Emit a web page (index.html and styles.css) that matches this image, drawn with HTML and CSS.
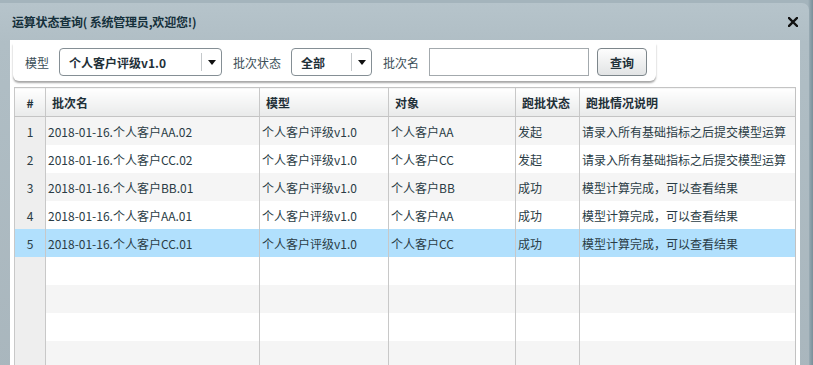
FILE: index.html
```html
<!DOCTYPE html>
<html lang="zh-CN">
<head>
  <meta charset="UTF-8">
  <title>运算状态查询</title>
  <link rel="stylesheet" href="styles.css">
</head>
<body>
  <div class="window">
    <div class="window-header">
      <span class="window-title">运算状态查询( 系统管理员,欢迎您!)</span>
      <svg class="close-icon" width="10" height="10" viewBox="0 0 10 10">
        <path d="M1 1 L9 9 M9 1 L1 9" stroke="#111" stroke-width="2.4" stroke-linecap="square"/>
      </svg>
    </div>

    <div class="window-body">
      <div class="toolbar">
        <span class="label">模型</span>
        <div class="combo combo-model">
          <span class="combo-text">个人客户评级v1.0</span>
          <span class="combo-arrow"></span>
        </div>
        <span class="label">批次状态</span>
        <div class="combo combo-status">
          <span class="combo-text">全部</span>
          <span class="combo-arrow"></span>
        </div>
        <span class="label">批次名</span>
        <input class="text-input" type="text">
        <button class="btn">查询</button>
      </div>

      <table class="grid">
        <colgroup>
          <col class="c-num">
          <col class="c-name">
          <col class="c-model">
          <col class="c-target">
          <col class="c-state">
          <col class="c-desc">
        </colgroup>
        <thead>
          <tr>
            <th class="num">#</th>
            <th>批次名</th>
            <th>模型</th>
            <th>对象</th>
            <th>跑批状态</th>
            <th>跑批情况说明</th>
          </tr>
        </thead>
        <tbody>
          <tr class="alt">
            <td class="num">1</td>
            <td>2018-01-16.个人客户AA.02</td>
            <td>个人客户评级v1.0</td>
            <td>个人客户AA</td>
            <td>发起</td>
            <td>请录入所有基础指标之后提交模型运算</td>
          </tr>
          <tr>
            <td class="num">2</td>
            <td>2018-01-16.个人客户CC.02</td>
            <td>个人客户评级v1.0</td>
            <td>个人客户CC</td>
            <td>发起</td>
            <td>请录入所有基础指标之后提交模型运算</td>
          </tr>
          <tr class="alt">
            <td class="num">3</td>
            <td>2018-01-16.个人客户BB.01</td>
            <td>个人客户评级v1.0</td>
            <td>个人客户BB</td>
            <td>成功</td>
            <td>模型计算完成，可以查看结果</td>
          </tr>
          <tr>
            <td class="num">4</td>
            <td>2018-01-16.个人客户AA.01</td>
            <td>个人客户评级v1.0</td>
            <td>个人客户AA</td>
            <td>成功</td>
            <td>模型计算完成，可以查看结果</td>
          </tr>
          <tr class="selected">
            <td class="num">5</td>
            <td>2018-01-16.个人客户CC.01</td>
            <td>个人客户评级v1.0</td>
            <td>个人客户CC</td>
            <td>成功</td>
            <td>模型计算完成，可以查看结果</td>
          </tr>
          <tr><td class="num"></td><td></td><td></td><td></td><td></td><td></td></tr>
          <tr class="alt"><td class="num"></td><td></td><td></td><td></td><td></td><td></td></tr>
          <tr><td class="num"></td><td></td><td></td><td></td><td></td><td></td></tr>
          <tr class="alt"><td class="num"></td><td></td><td></td><td></td><td></td><td></td></tr>
        </tbody>
      </table>
    </div>
  </div>
</body>
</html>
```

FILE: styles.css
```css
html, body {
  height: 100%;
}

body {
  margin: 0;
  overflow: hidden;
  background: linear-gradient(to right, #a4b4bc 0, #a4b4bc 808px, #889ca6 811px, #7a8f99 100%);
  font-family: "Noto Sans CJK SC", "Noto Sans", sans-serif;
  font-size: 12px;
  color: #2a3c45;
}

.window {
  margin-top: 3px;
  width: 809px;
  height: 420px;
  border-radius: 0 7px 0 0;
  background: linear-gradient(to bottom, #b6c4cb 0, #b0bec5 40px, #a8b5bc 100%);
}

.window-header {
  display: flex;
  align-items: center;
  justify-content: space-between;
  height: 37px;
  padding: 0 11px 0 12px;
}

.window-title {
  font-weight: bold;
  color: #15303b;
  letter-spacing: -0.2px;
}

.close-icon {
  display: block;
}

.window-body {
  margin: 0 9px 0 10px;
  height: 400px;
  background: #fff;
  padding-top: 3px;
}

/* search bar */
.toolbar {
  display: inline-flex;
  align-items: center;
  margin-left: 3px;
  height: 38px;
  padding: 0 9px 0 12px;
  background: #fff;
  border-radius: 0 0 6px 6px;
  box-shadow: 0 2px 2px rgba(0, 0, 0, 0.35);
}

.label {
  color: #3b4e57;
  margin-right: 10px;
}

.combo {
  display: flex;
  align-items: center;
  border: 1px solid #858f95;
  border-radius: 4px;
  background: #fff;
  margin-right: 11px;
  box-sizing: border-box;
  height: 28px;
}

.combo-model {
  width: 163px;
}

.combo-status {
  width: 81px;
}

.combo-text {
  flex: 1;
  padding-left: 9px;
  font-weight: bold;
  color: #1f3038;
}

.combo-arrow {
  position: relative;
  width: 19px;
  height: 18px;
  border-left: 1px solid #c4c8cb;
}

.combo-arrow::after {
  content: "";
  position: absolute;
  left: 6px;
  top: 7px;
  border-left: 4px solid transparent;
  border-right: 4px solid transparent;
  border-top: 5px solid #111;
}

.text-input {
  width: 160px;
  height: 28px;
  box-sizing: border-box;
  border: 1px solid #a3a9ad;
  margin: 0 8px 0 0;
  padding: 0 4px;
  font-family: inherit;
}

.btn {
  width: 50px;
  height: 28px;
  border: 1px solid #7d868b;
  border-radius: 4px;
  background: linear-gradient(to bottom, #fdfdfd, #e2e4e5);
  font-family: inherit;
  font-size: 12px;
  font-weight: bold;
  color: #1f3038;
  padding: 0;
}

/* data grid */
.grid {
  margin: 6px 0 0 4px;
  width: 781px;
  table-layout: fixed;
  border-collapse: collapse;
  border-left: 1px solid #c2c2c2;
  border-right: 1px solid #c2c2c2;
}

.c-num { width: 31px; }
.c-name { width: 214px; }
.c-model { width: 129px; }
.c-target { width: 127px; }
.c-state { width: 64px; }
.c-desc { width: 216px; }

.grid th {
  height: 28px;
  padding: 0 0 0 6px;
  text-align: left;
  font-weight: bold;
  color: #1f3038;
  background: linear-gradient(to bottom, #ffffff, #e9eaea);
  border-top: 1px solid #c4c4c4;
  border-bottom: 1px solid #c4c4c4;
  border-left: 1px solid #c8c8c8;
}

.grid td {
  height: 28px;
  padding: 0 0 0 2px;
  white-space: nowrap;
  overflow: hidden;
  border-left: 1px solid #c8c8c8;
  background: #fff;
}

.grid tr.alt td {
  background: #f5f5f5;
}

.grid th.num,
.grid td.num {
  padding: 0;
  text-align: center;
}

.grid td.num,
.grid tr.alt td.num {
  background: #eeeeee;
}

.grid tr.selected td {
  background: #b1e0fd;
}
```
